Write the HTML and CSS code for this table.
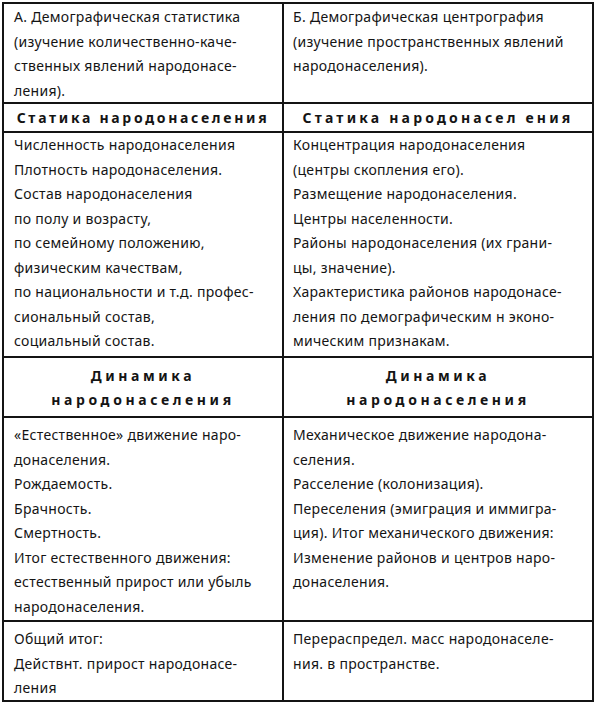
FILE: index.html
```html
<!DOCTYPE html>
<html lang="ru">
<head>
<meta charset="utf-8">
<link rel="stylesheet" href="styles.css">
</head>
<body>
<div class="table">
  <div class="cell r1">
    <span class="ln">А. Демографическая статистика</span>
    <span class="ln">(изучение количественно-каче-</span>
    <span class="ln">ственных явлений народонасе-</span>
    <span class="ln">ления).</span>
  </div>
  <div class="cell r1">
    <span class="ln">Б. Демографическая центрография</span>
    <span class="ln">(изучение пространственных явлений</span>
    <span class="ln">народонаселения).</span>
  </div>
  <div class="cell head">Статика народонаселения</div>
  <div class="cell head wide">Статика народонасел ения</div>
  <div class="cell r3">
    <span class="ln">Численность народонаселения</span>
    <span class="ln">Плотность народонаселения.</span>
    <span class="ln">Состав народонаселения</span>
    <span class="ln">по полу и возрасту,</span>
    <span class="ln">по семейному положению,</span>
    <span class="ln">физическим качествам,</span>
    <span class="ln">по национальности и т.д. профес-</span>
    <span class="ln">сиональный состав,</span>
    <span class="ln">социальный состав.</span>
  </div>
  <div class="cell r3">
    <span class="ln">Концентрация народонаселения</span>
    <span class="ln">(центры скопления его).</span>
    <span class="ln">Размещение народонаселения.</span>
    <span class="ln">Центры населенности.</span>
    <span class="ln">Районы народонаселения (их грани-</span>
    <span class="ln">цы, значение).</span>
    <span class="ln">Характеристика районов народонасе-</span>
    <span class="ln">ления по демографическим н эконо-</span>
    <span class="ln">мическим признакам.</span>
  </div>
  <div class="cell head2">
    <span class="ln">Динамика</span>
    <span class="ln">народонаселения</span>
  </div>
  <div class="cell head2">
    <span class="ln">Динамика</span>
    <span class="ln">народонаселения</span>
  </div>
  <div class="cell r5">
    <span class="ln">«Естественное» движение наро-</span>
    <span class="ln">донаселения.</span>
    <span class="ln">Рождаемость.</span>
    <span class="ln">Брачность.</span>
    <span class="ln">Смертность.</span>
    <span class="ln">Итог естественного движения:</span>
    <span class="ln">естественный прирост или убыль</span>
    <span class="ln">народонаселения.</span>
  </div>
  <div class="cell r5">
    <span class="ln">Механическое движение народона-</span>
    <span class="ln">селения.</span>
    <span class="ln">Расселение (колонизация).</span>
    <span class="ln">Переселения (эмиграция и иммигра-</span>
    <span class="ln">ция). Итог механического движения:</span>
    <span class="ln">Изменение районов и центров наро-</span>
    <span class="ln">донаселения.</span>
  </div>
  <div class="cell r6">
    <span class="ln">Общий итог:</span>
    <span class="ln">Действнт. прирост народонасе-</span>
    <span class="ln">ления</span>
  </div>
  <div class="cell r6">
    <span class="ln">Перераспредел. масс народонаселе-</span>
    <span class="ln">ния. в пространстве.</span>
  </div>
</div>
</body>
</html>
```
FILE: styles.css
```css
html, body {
  margin: 0;
  padding: 0;
  background: #ffffff;
}
body {
  padding: 2px;
  font-family: "Noto Sans", "Open Sans", sans-serif;
  font-size: 14px;
  color: #141414;
}
.table {
  display: grid;
  grid-template-columns: 278px 308px;
  grid-template-rows: 98px 27px 223px 58px 202px 78px;
  gap: 2px;
  padding: 2px;
  background: #141414;
  width: max-content;
}
.cell {
  background: #ffffff;
  padding: 0 6px 0 10px;
  line-height: 24.5px;
  letter-spacing: 0.3px;
  white-space: nowrap;
}
.cell:nth-child(even) {
  padding-left: 9px;
}
.ln {
  display: block;
}
.r1 { padding-top: 1px; }
.r3 { padding-top: 0; }
.r5 { padding-top: 5px; }
.r6 { padding-top: 5px; }
.head {
  font-weight: 700;
  text-align: center;
  letter-spacing: 2.7px;
  line-height: 27px;
  padding-left: 0;
  padding-right: 0;
}
.head.wide {
  letter-spacing: 3.2px;
}
.head2 {
  font-weight: 700;
  text-align: center;
  letter-spacing: 3.6px;
  line-height: 24px;
  padding-top: 6px;
  padding-left: 0;
  padding-right: 0;
}
.cell.head:nth-child(even),
.cell.head2:nth-child(even) {
  padding-left: 0;
}
```
